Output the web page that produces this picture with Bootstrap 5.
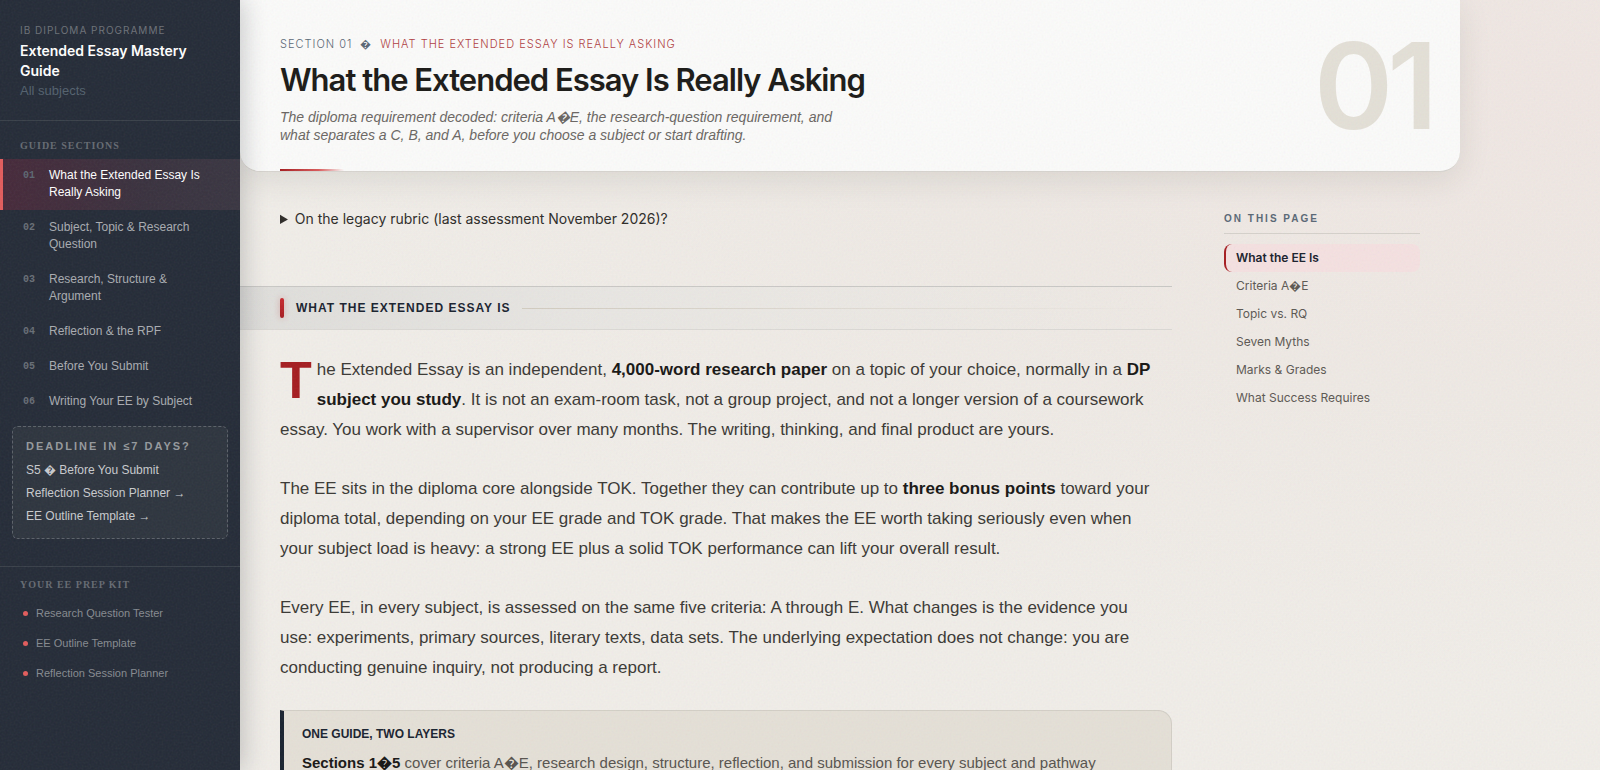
<!DOCTYPE html>
<html lang="en">
<head>
<meta charset="utf-8">
<meta name="viewport" content="width=device-width, initial-scale=1">
<title>Extended Essay Mastery Guide</title>
<link href="https://cdn.jsdelivr.net/npm/bootstrap@5.3.0/dist/css/bootstrap.min.css" rel="stylesheet">
<style>
:root { --navy:#242b37; --red:#a51c20; --coral:#e25c5c; --slate:#596775; --ink:#1a1916; }
body { font-family:"Liberation Sans",sans-serif; color:#3a3834; background:radial-gradient(ellipse at 100% 10%, #f0e7e3 0%, #efeae5 32%, #f1eee9 60%) #f1eee9; }
a { text-decoration:none; color:inherit; }
.grain { position:fixed; inset:0; width:100%; height:100%; pointer-events:none; opacity:.07; z-index:1030; }

.guide-side { width:240px; background:var(--navy); z-index:5; box-shadow:2px 0 24px rgba(20,25,35,.24); }
.side-head { padding:23px 20px 20px; border-bottom:1px solid #394049; }
.side-kicker { font-family:Inter,sans-serif; font-size:10px; line-height:14px; letter-spacing:1px; color:#6c7178; margin-bottom:4px; }
.side-title { font-family:Inter,sans-serif; font-size:14px; line-height:20px; font-weight:600; color:#fff; margin:0 0 1px; }
.side-sub { font-size:13px; line-height:18px; color:#53616e; }
.serif-label { font:bold 10px/14px "Liberation Serif",serif; letter-spacing:1px; color:#656a72; padding:0 20px; margin:0 0 6px; }
.sections { padding-top:18px; }
.sec-link { display:flex; font-size:12px; line-height:17px; padding:8px 20px 9px; border-left:3px solid transparent; margin-bottom:1px; color:#a9acb1; }
.sec-link .idx { font:bold 10px/17px "Liberation Mono",monospace; width:26px; flex:none; color:#686e76; }
.sec-link.active { color:#fff; border-color:var(--coral); background:linear-gradient(90deg,#46293a,#39313e 60%,#393541); }
.sec-link.active .idx { color:#5c6672; }
.rush { margin:7px 12px 27px; padding:12px 13px 10px; border:1px dashed #5b6169; border-radius:6px; background:#2d343e; color:#c9cbce; font-size:12px; }
.rush h2 { font-size:11px; line-height:14px; font-weight:700; letter-spacing:2px; color:#95999d; margin:0 0 6px; }
.rush a { display:block; line-height:23px; }
.kit { border-top:1px solid #394049; padding-top:11px; }
.kit a { display:flex; align-items:center; gap:8px; padding-left:23px; height:30px; font-size:11px; color:#868a90; }
.kit a::before { content:""; width:5px; height:5px; border-radius:50%; background:var(--coral); }

.guide-body { max-width:1220px; }
.hero { background:#fbfbfa; border-radius:0 0 20px 20px; border-bottom:1px solid #d7d4cf; padding:36px 28px 27px 40px; box-shadow:0 8px 32px rgba(40,35,25,.10); position:relative; }
.hero::after { content:""; position:absolute; left:40px; bottom:0; width:64px; height:2px; background:linear-gradient(90deg,var(--red),#d95a5a 60%,transparent); }
.crumb { font-family:Inter,sans-serif; font-weight:300; font-size:11px; line-height:16px; letter-spacing:1px; color:var(--slate); text-transform:uppercase; }
.crumb em { font-style:normal; color:#b03b3f; }
.hero h1 { font-family:Inter,sans-serif; font-size:31px; line-height:40px; font-weight:600; letter-spacing:-1px; color:var(--ink); margin:8px 0; }
.hero-sub { font-size:14px; line-height:18px; font-style:italic; color:#6a6662; max-width:580px; margin:0; }
.hero-num { font-family:Inter,sans-serif; font-size:120px; line-height:100px; font-weight:600; letter-spacing:-6px; color:#e4e0d7; }

.legacy { font-family:Inter,sans-serif; padding:37px 40px 0; font-size:14px; line-height:20px; color:#2d2b28; }
.band { margin-top:57px; height:44px; padding-left:40px; border-top:1px solid #c9c8c5; border-bottom:1px solid #dbd9d5; background:linear-gradient(90deg,#dfdedb,#e9e7e3 40%,rgba(241,238,233,0)); }
.band::before { content:""; width:4px; height:20px; border-radius:2px; background:linear-gradient(#c9282d,var(--red)); box-shadow:0 0 6px rgba(190,40,40,.3); margin-right:12px; }
.band::after { content:""; flex:1; height:1px; margin-left:12px; background:linear-gradient(90deg,#d2ccc0,transparent); }
.band h2 { font-size:12px; line-height:16px; font-weight:700; letter-spacing:1px; color:#18222f; margin:0; }
.prose { padding:25px 0 0 40px; }
.prose p { font-size:17px; line-height:30px; margin:0 0 29px; padding-right:10px; }
.prose strong { font-weight:700; color:#171614; }
.prose .opening::first-letter { float:left; font-size:52px; line-height:50px; font-weight:700; color:var(--red); padding:0 5px 0 0; }
.layers { border:1px solid #d3cfc6; border-left:4px solid #18222f; border-radius:0 14px 14px 0; background:#e5e0d7; padding:15px 18px 20px; margin-top:-2px; }
.layers h3 { font-size:12px; line-height:16px; font-weight:700; letter-spacing:0; color:#18222f; margin:0 0 9px; }
.prose .layers p { font-size:15px; line-height:24px; margin:0; color:#57534e; }
.toc { width:196px; margin:38px 40px 0 52px; flex:none; }
.toc h2 { font-size:10px; line-height:18px; font-weight:700; letter-spacing:2px; color:#596775; padding-bottom:5px; border-bottom:1px solid #d5d1cb; margin:0 0 10px; }
.toc a { display:block; font-family:Inter,sans-serif; font-size:12px; line-height:28px; padding-left:10px; border-left:2px solid transparent; color:#5c5853; }
.toc a.active { font-weight:600; color:#18202c; background:#f5e1e1; border-color:var(--red); border-radius:8px; }
@media (max-width:1100px) { .toc { display:none; } }
</style>
</head>
<body>
<svg class="grain" aria-hidden="true"><filter id="n"><feTurbulence type="fractalNoise" baseFrequency=".5" numOctaves="3"/></filter><rect width="100%" height="100%" filter="url(#n)"/></svg>
<div class="d-flex align-items-start">
  <aside class="guide-side flex-shrink-0 sticky-top vh-100">
    <div class="side-head">
      <div class="side-kicker">IB DIPLOMA PROGRAMME</div>
      <p class="side-title">Extended Essay Mastery Guide</p>
      <div class="side-sub">All subjects</div>
    </div>
    <nav aria-label="Guide sections" class="sections">
      <h2 class="serif-label">GUIDE SECTIONS</h2>
      <a class="sec-link active" href="#s1"><span class="idx">01</span><span>What the Extended Essay Is Really Asking</span></a>
      <a class="sec-link" href="#s2"><span class="idx">02</span><span>Subject, Topic &amp; Research Question</span></a>
      <a class="sec-link" href="#s3"><span class="idx">03</span><span>Research, Structure &amp; Argument</span></a>
      <a class="sec-link" href="#s4"><span class="idx">04</span><span>Reflection &amp; the RPF</span></a>
      <a class="sec-link" href="#s5"><span class="idx">05</span><span>Before You Submit</span></a>
      <a class="sec-link" href="#s6"><span class="idx">06</span><span>Writing Your EE by Subject</span></a>
    </nav>
    <div class="rush">
      <h2>DEADLINE IN ≤7 DAYS?</h2>
      <a href="#s5">S5 &#xFFFD; Before You Submit</a>
      <a href="#planner">Reflection Session Planner →</a>
      <a href="#outline">EE Outline Template →</a>
    </div>
    <nav class="kit" aria-label="Your EE prep kit">
      <h2 class="serif-label">YOUR EE PREP KIT</h2>
      <a href="#tester">Research Question Tester</a>
      <a href="#outline">EE Outline Template</a>
      <a href="#planner">Reflection Session Planner</a>
    </nav>
  </aside>

  <main class="guide-body flex-grow-1" id="s1">
    <header class="hero d-flex justify-content-between align-items-start">
      <div>
        <div class="crumb d-flex gap-2"><span>Section 01</span><span>&#xFFFD;</span><em>What the Extended Essay Is Really Asking</em></div>
        <h1>What the Extended Essay Is Really Asking</h1>
        <p class="hero-sub">The diploma requirement decoded: criteria A&#xFFFD;E, the research-question requirement, and what separates a C, B, and A, before you choose a subject or start drafting.</p>
      </div>
      <div class="hero-num" aria-hidden="true">01</div>
    </header>
    <div class="d-flex align-items-start">
      <article class="flex-grow-1">
        <details class="legacy"><summary>On the legacy rubric (last assessment November 2026)?</summary></details>
        <div class="band d-flex align-items-center" id="what"><h2>WHAT THE EXTENDED ESSAY IS</h2></div>
        <div class="prose">
          <p class="opening">The Extended Essay is an independent, <strong>4,000-word research paper</strong> on a topic of your choice, normally in a <strong>DP subject you study</strong>. It is not an exam-room task, not a group project, and not a longer version of a coursework essay. You work with a supervisor over many months. The writing, thinking, and final product are yours.</p>
          <p>The EE sits in the diploma core alongside TOK. Together they can contribute up to <strong>three bonus points</strong> toward your diploma total, depending on your EE grade and TOK grade. That makes the EE worth taking seriously even when your subject load is heavy: a strong EE plus a solid TOK performance can lift your overall result.</p>
          <p>Every EE, in every subject, is assessed on the same five criteria: A through E. What changes is the evidence you use: experiments, primary sources, literary texts, data sets. The underlying expectation does not change: you are conducting genuine inquiry, not producing a report.</p>
          <section class="layers">
            <h3>ONE GUIDE, TWO LAYERS</h3>
            <p><strong>Sections 1&#xFFFD;5</strong> cover criteria A&#xFFFD;E, research design, structure, reflection, and submission for every subject and pathway</p>
          </section>
        </div>
      </article>
      <nav class="toc" aria-label="On this page">
        <h2>ON THIS PAGE</h2>
        <a class="active" href="#what">What the EE Is</a>
        <a href="#criteria">Criteria A&#xFFFD;E</a>
        <a href="#topic">Topic vs. RQ</a>
        <a href="#myths">Seven Myths</a>
        <a href="#marks">Marks &amp; Grades</a>
        <a href="#success">What Success Requires</a>
      </nav>
    </div>
  </main>
</div>
<script src="https://cdn.jsdelivr.net/npm/bootstrap@5.3.0/dist/js/bootstrap.bundle.min.js"></script>
</body>
</html>
